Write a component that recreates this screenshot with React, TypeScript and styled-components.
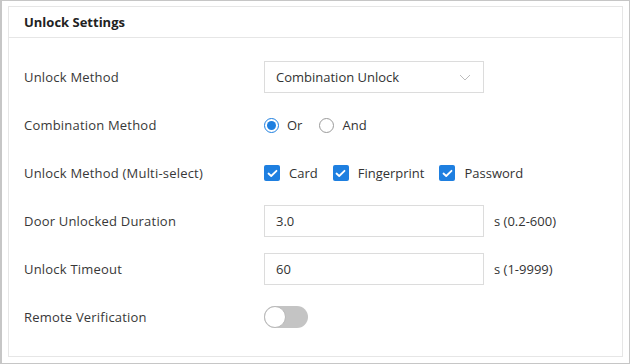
import { useState } from "react";
import styled, { createGlobalStyle } from "styled-components";

const Global = createGlobalStyle`
  html, body {
    margin: 0;
    padding: 0;
    background: #ffffff;
  }
  * {
    box-sizing: border-box;
  }
`

const Frame = styled.div`
  width: 630px;
  height: 364px;
  border: 1px solid #c6c6c6;
  border-left-width: 2px;
  padding: 5px 6px 6px 6px;
  font-family: "Open Sans", "Noto Sans", sans-serif;
  font-size: 13px;
  color: #333333;
`

const Panel = styled.section`
  height: 100%;
  border: 1px solid #e6e6e6;
  display: flex;
  flex-direction: column;
`

const Header = styled.header`
  height: 31px;
  border-bottom: 1px solid #e6e6e6;
  display: flex;
  align-items: center;
  padding-left: 15px;
  font-weight: bold;
  font-size: 13px;
  color: #222222;
`

const Body = styled.div`
  padding: 15px 0 14px 15px;
  display: flex;
  flex-direction: column;
`

const Row = styled.div`
  height: 48px;
  display: grid;
  grid-template-columns: 240px 1fr;
  align-items: center;
`

const Label = styled.div`
  color: #383838;
  letter-spacing: 0.2px;
`

const Controls = styled.div`
  display: flex;
  align-items: center;
`

const SelectBox = styled.div`
  width: 220px;
  height: 32px;
  border: 1px solid #dcdcdc;
  display: flex;
  align-items: center;
  justify-content: space-between;
  padding: 0 12px 0 11px;
  color: #333333;
`

const Input = styled.input`
  width: 220px;
  height: 32px;
  border: 1px solid #dcdcdc;
  padding: 0 11px;
  font-family: inherit;
  font-size: 13px;
  color: #333333;
  outline: none;
`

const Suffix = styled.span`
  margin-left: 10px;
  color: #333333;
`

const Option = styled.label<{ $gap: number }>`
  display: flex;
  align-items: center;
  margin-right: ${p => p.$gap}px;
  cursor: pointer;
`

const Radio = styled.span<{ $on: boolean }>`
  width: 15px;
  height: 15px;
  border-radius: 50%;
  border: 1px solid ${p => (p.$on ? "#1e7fe0" : "#9a9a9a")};
  display: flex;
  align-items: center;
  justify-content: center;
  margin-right: 8px;

  &::after {
    content: "";
    width: 9px;
    height: 9px;
    border-radius: 50%;
    background: ${p => (p.$on ? "#1e7fe0" : "transparent")};
  }
`

const Check = styled.span`
  width: 16px;
  height: 16px;
  border-radius: 2px;
  background: #1e7fe0;
  display: flex;
  align-items: center;
  justify-content: center;
  margin-right: 9px;
`

const Toggle = styled.button<{ $on: boolean }>`
  width: 44px;
  height: 22px;
  border-radius: 11px;
  border: none;
  padding: 0;
  background: ${p => (p.$on ? "#1e7fe0" : "#c4c4c4")};
  display: flex;
  align-items: center;
  justify-content: ${p => (p.$on ? "flex-end" : "flex-start")};
  cursor: pointer;

  &::after {
    content: "";
    width: 22px;
    height: 22px;
    border-radius: 50%;
    background: #ffffff;
    border: 1px solid #b8b8b8;
    box-sizing: border-box;
  }
`

function Tick() {
    return (
        <svg width="11" height="9" viewBox="0 0 11 9">
            <path d="M1.5 4.5 L4.2 7 L9.5 1.8" fill="none" stroke="#ffffff" strokeWidth="1.8" strokeLinecap="round" strokeLinejoin="round" />
        </svg>
    )
}

function Chevron() {
    return (
        <svg width="12" height="7" viewBox="0 0 12 7">
            <path d="M1 1 L6 6 L11 1" fill="none" stroke="#bdbdbd" strokeWidth="1" />
        </svg>
    )
}

export default function App() {
    const [combo, setCombo] = useState("or");
    const [duration, setDuration] = useState("3.0");
    const [timeout, setTimeoutValue] = useState("60");
    const [remote, setRemote] = useState(false);

    return (
        <>
            <Global />
            <Frame>
                <Panel>
                    <Header>Unlock Settings</Header>
                    <Body>
                        <Row>
                            <Label>Unlock Method</Label>
                            <Controls>
                                <SelectBox>
                                    <span>Combination Unlock</span>
                                    <Chevron />
                                </SelectBox>
                            </Controls>
                        </Row>
                        <Row>
                            <Label>Combination Method</Label>
                            <Controls>
                                <Option $gap={17} onClick={() => setCombo("or")}>
                                    <Radio $on={combo === "or"} />Or
                                </Option>
                                <Option $gap={0} onClick={() => setCombo("and")}>
                                    <Radio $on={combo === "and"} />And
                                </Option>
                            </Controls>
                        </Row>
                        <Row>
                            <Label>Unlock Method (Multi-select)</Label>
                            <Controls>
                                <Option $gap={15}><Check><Tick /></Check>Card</Option>
                                <Option $gap={15}><Check><Tick /></Check>Fingerprint</Option>
                                <Option $gap={0}><Check><Tick /></Check>Password</Option>
                            </Controls>
                        </Row>
                        <Row>
                            <Label>Door Unlocked Duration</Label>
                            <Controls>
                                <Input value={duration} onChange={e => setDuration(e.target.value)} />
                                <Suffix>s (0.2-600)</Suffix>
                            </Controls>
                        </Row>
                        <Row>
                            <Label>Unlock Timeout</Label>
                            <Controls>
                                <Input value={timeout} onChange={e => setTimeoutValue(e.target.value)} />
                                <Suffix>s (1-9999)</Suffix>
                            </Controls>
                        </Row>
                        <Row>
                            <Label>Remote Verification</Label>
                            <Controls>
                                <Toggle $on={remote} onClick={() => setRemote(!remote)} />
                            </Controls>
                        </Row>
                    </Body>
                </Panel>
            </Frame>
        </>
    )
}
